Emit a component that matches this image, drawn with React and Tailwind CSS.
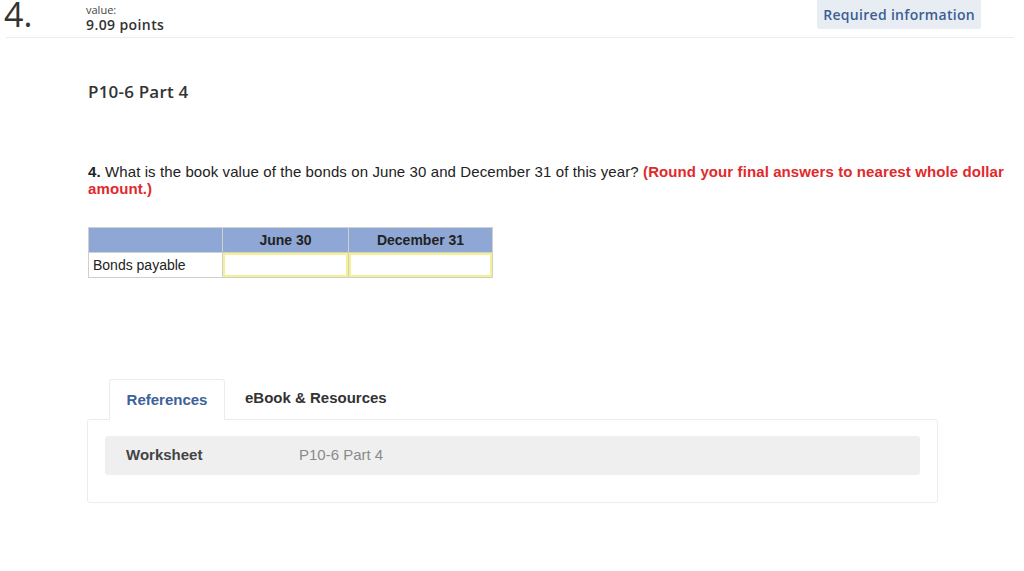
export default function App() {
  return (
    <div className="w-[1024px] h-[571px] bg-white overflow-hidden font-['Liberation_Sans',Arial,sans-serif] text-[#333]">
      {/* Header */}
      <div className="ml-[6px] mr-[10px] h-[38px] border-b border-[#ececec] flex items-start">
        <div className="w-[82px] -ml-[2px] -mt-[4px] font-['Open_Sans',sans-serif] text-[34px] leading-[36px] font-medium text-[#333]">4.</div>
        <div className="pt-[3px] font-['Open_Sans',sans-serif]">
          <div className="text-[11px] leading-[13px] text-[#444]">value:</div>
          <div className="text-[14px] leading-[18px] font-semibold text-[#333] tracking-[0.4px]">9.09 points</div>
        </div>
        <div className="ml-auto mr-[33px] h-[29px] px-[6px] rounded-b-[3px] bg-[#e8edf3] flex items-center font-['Open_Sans',sans-serif] text-[14px] font-semibold text-[#3c5e93] tracking-[0.3px]">
          Required information
        </div>
      </div>

      <div className="pl-[88px]">
        <h2 className="mt-[43px] font-['Open_Sans',sans-serif] text-[17px] leading-[22px] font-semibold text-[#333] tracking-[0.2px]">P10-6 Part 4</h2>

        <p className="mt-[60px] text-[15px] leading-[17px] text-[#222] pr-[8px] tracking-[0.1px]">
          <b>4.</b> What is the book value of the bonds on June 30 and December 31 of this year?{" "}
          <b className="text-[#e0292c]">(Round your final answers to nearest whole dollar amount.)</b>
        </p>

        <table className="mt-[30px] border-collapse text-[14px]">
          <thead>
            <tr className="bg-[#8fa7d4] h-[25px]">
              <th className="w-[134px] border border-[#cfcfcf]"></th>
              <th className="w-[126px] border border-[#cfcfcf] font-bold text-[#222]">June 30</th>
              <th className="w-[144px] border border-[#cfcfcf] font-bold text-[#222]">December 31</th>
            </tr>
          </thead>
          <tbody>
            <tr className="h-[25px]">
              <td className="border border-[#cfcfcf] pl-[4px] text-[#222]">Bonds payable</td>
              <td className="border border-[#cfcfcf] p-0">
                <div className="h-[24px] border-2 border-[#f4f18e]"></div>
              </td>
              <td className="border border-[#cfcfcf] p-0">
                <div className="h-[24px] border-2 border-[#f4f18e]"></div>
              </td>
            </tr>
          </tbody>
        </table>
      </div>

      {/* References */}
      <div className="ml-[87px] mt-[100px] w-[851px]">
        <div className="flex items-end h-[41px] pl-[22px]">
          <div className="h-[41px] w-[116px] border border-b-0 border-[#ececec] rounded-t-[3px] bg-white flex items-center justify-center text-[15px] font-bold text-[#3d6198] -mb-px relative z-10">
            References
          </div>
          <div className="h-[41px] flex items-center pl-[20px] text-[15px] font-bold text-[#333]">eBook &amp; Resources</div>
        </div>
        <div className="border border-[#ececec] rounded-[3px] h-[84px] px-[17px] pt-[16px]">
          <div className="h-[39px] bg-[#efefef] rounded-[3px] flex items-center text-[15px]">
            <span className="pl-[21px] w-[194px] font-bold text-[#444]">Worksheet</span>
            <span className="text-[#8a8a8a]">P10-6 Part 4</span>
          </div>
        </div>
      </div>
    </div>
  );
}
